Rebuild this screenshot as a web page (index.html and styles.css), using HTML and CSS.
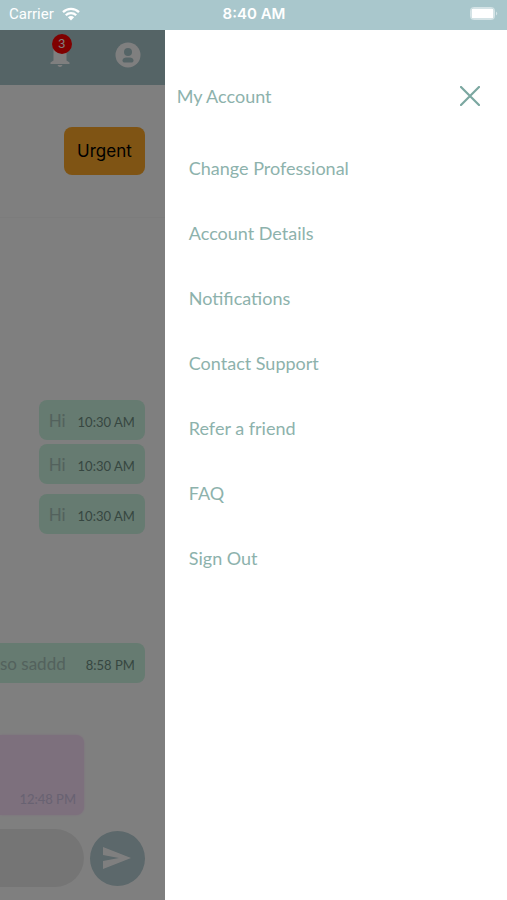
FILE: index.html
```html
<!DOCTYPE html>
<html lang="en">
<head>
    <meta charset="UTF-8">
    <meta name="viewport" content="width=device-width, initial-scale=1.0">
    <title>My Account</title>
    <link rel="stylesheet" href="styles.css">
</head>

<body>
    <div class="status-bar">
        <div class="carrier">
            <span>Carrier</span>
            <svg class="wifi" viewBox="0 0 18 14" width="18" height="14">
                <path d="M1 5.2a11.5 11.5 0 0 1 16 0M3.8 8.2a7.4 7.4 0 0 1 10.4 0" fill="none" stroke="currentColor" stroke-width="2.3"/>
                <path d="M5.9 10.3a4.4 4.4 0 0 1 6.2 0L9 13.6z" fill="currentColor"/>
            </svg>
        </div>
        <span class="clock">8:40 AM</span>
        <svg class="battery" viewBox="0 0 29 13" width="29" height="13">
            <rect x="0.5" y="0.5" width="24" height="12" rx="3" fill="none" stroke="#fff" stroke-opacity="0.5"/>
            <rect x="1.5" y="1.5" width="22" height="10" rx="1.5" fill="#fff"/>
            <path d="M26 4.5q2.5 2 0 4z" fill="#fff" fill-opacity="0.5"/>
        </svg>
    </div>

    <div class="screen">
        <main class="chat">
            <header class="chat-header">
                <button class="icon-button" aria-label="Alerts">
                    <svg viewBox="0 0 26 26" width="26" height="26" fill="currentColor">
                        <path d="M13 2c-4 0-6.5 3-6.5 7v9.500L3.500 20.500v1.500h19v-1.500l-3-2V9c0-4-2.500-7-6.500-7zM10.500 23h5c-.5 1.300-1.400 2-2.500 2s-2-.7-2.500-2z"/>
                    </svg>
                    <span class="badge">3</span>
                </button>
                <button class="icon-button" aria-label="Profile">
                    <svg viewBox="0 0 26 26" width="26" height="26">
                        <circle cx="13" cy="13" r="12.5" fill="currentColor"/>
                        <circle cx="13" cy="10" r="4" fill="#abc8cd"/>
                        <path d="M7.500 18.500c0-2.500 2.500-3 5.500-3s5.500.5 5.500 3c0 1.500-1 2-2 2h-7c-1 0-2-.5-2-2z" fill="#abc8cd"/>
                    </svg>
                </button>
            </header>

            <div class="chat-actions">
                <button class="urgent">Urgent</button>
            </div>

            <div class="messages">
                <div class="message-group">
                    <div class="message sent"><span>Hi</span><time>10:30 AM</time></div>
                    <div class="message sent"><span>Hi</span><time>10:30 AM</time></div>
                    <div class="message sent spaced"><span>Hi</span><time>10:30 AM</time></div>
                </div>
                <div class="message sent late"><span>so saddd</span><time>8:58 PM</time></div>
                <div class="message received"><time>12:48 PM</time></div>
            </div>

            <form class="composer">
                <input type="text" class="composer-input" aria-label="Message">
                <button type="button" class="send" aria-label="Send">
                    <svg viewBox="0 0 28 24" width="28" height="24">
                        <path d="M0 1l28 11L0 23v-8l16-3L0 9z" fill="currentColor"/>
                    </svg>
                </button>
            </form>
            <div class="overlay"></div>
        </main>

        <aside class="drawer">
            <div class="drawer-header">
                <h1>My Account</h1>
                <button class="close" aria-label="Close">
                    <svg viewBox="0 0 20 20" width="20" height="20">
                        <path d="M1 1l18 18M19 1L1 19" stroke="currentColor" stroke-width="2.2" stroke-linecap="round"/>
                    </svg>
                </button>
            </div>
            <nav class="menu">
                <a href="#professional">Change Professional</a>
                <a href="#details">Account Details</a>
                <a href="#notifications">Notifications</a>
                <a href="#support">Contact Support</a>
                <a href="#refer">Refer a friend</a>
                <a href="#faq">FAQ</a>
                <a href="#signout">Sign Out</a>
            </nav>
        </aside>
    </div>
</body>

</html>
```

FILE: styles.css
```css
* {
    box-sizing: border-box;
}

body {
    margin: 0;
    display: flex;
    flex-direction: column;
    height: 100vh;
    background-color: #fff;
    font-family: Lato, sans-serif;
}

button {
    padding: 0;
    border: none;
    background: none;
    cursor: pointer;
}

svg {
    display: block;
}

.status-bar {
    display: grid;
    grid-template-columns: 1fr auto 1fr;
    align-items: center;
    flex: 0 0 30px;
    padding: 0 8px 3px 9px;
    background-color: #a9c7cc;
    color: #fff;
    font-family: Roboto, sans-serif;
    font-size: 15px;
}

.carrier {
    display: flex;
    align-items: center;
    gap: 8px;
}

.clock {
    font-family: Inter, sans-serif;
    font-weight: 600;
}

.battery {
    justify-self: end;
}

.screen {
    flex: 1;
    min-height: 0;
    display: grid;
    grid-template-columns: 13fr 27fr;
}

/* Chat behind the drawer */
.chat {
    position: relative;
    display: flex;
    flex-direction: column;
    min-width: 0;
    min-height: 0;
    overflow: hidden;
}

.overlay {
    position: absolute;
    inset: 0;
    background-color: rgba(0, 0, 0, 0.5);
}

.chat-header {
    display: flex;
    justify-content: flex-end;
    align-items: center;
    gap: 42px;
    flex: 0 0 55px;
    padding: 0 24px 6px 0;
    background-color: #abc8cd;
}

.icon-button {
    position: relative;
    color: #fff;
}

.badge {
    position: absolute;
    top: -8px;
    left: 5px;
    width: 20px;
    height: 20px;
    border-radius: 50%;
    background-color: #f00;
    color: #fff;
    font-family: Inter, sans-serif;
    font-size: 12px;
    line-height: 20px;
}

.chat-actions {
    display: flex;
    justify-content: flex-end;
    padding: 42px 20px;
    border-bottom: 1px solid #f8f8f8;
}

.urgent {
    height: 48px;
    padding: 0 13px;
    border-radius: 8px;
    background-color: #ffa928;
    color: #000;
    font-family: Inter, sans-serif;
    font-size: 17px;
}

.messages {
    flex: 1;
    min-height: 0;
    display: flex;
    flex-direction: column;
    justify-content: flex-end;
    align-items: flex-end;
    padding: 0 20px 14px 0;
}

.message-group {
    display: flex;
    flex-direction: column;
    gap: 4px;
}

.message {
    display: flex;
    justify-content: space-between;
    align-items: center;
    gap: 12px;
    height: 40px;
    padding: 0 10px;
    border-radius: 8px;
    white-space: nowrap;
}

.message time {
    padding-top: 4px;
    font-size: 13px;
}

.sent {
    background-color: #cdf6e2;
    color: #a6c4ba;
    font-size: 17px;
}

.sent time {
    color: #6e8e82;
}

.spaced {
    margin-top: 6px;
}

.late {
    gap: 20px;
    margin: 109px 0 52px;
}

.received {
    align-self: flex-start;
    align-items: flex-end;
    justify-content: flex-end;
    width: 84px;
    height: 80px;
    padding: 0 8px 8px 0;
    border-radius: 0 8px 8px 0;
    background-color: #fae0fa;
    box-shadow: 0 0 3px #fae0fa;
    color: #d0c4e4;
}

.composer {
    display: flex;
    align-items: center;
    gap: 6px;
    padding: 0 20px 13px 0;
}

.composer-input {
    flex: 1;
    min-width: 0;
    height: 58px;
    border: none;
    border-radius: 0 29px 29px 0;
    background-color: #ebebeb;
}

.send {
    display: flex;
    justify-content: center;
    align-items: center;
    flex: 0 0 55px;
    height: 55px;
    border-radius: 50%;
    background-color: #b8d0d6;
    color: #fff;
}

/* Account drawer */
.drawer {
    background-color: #fff;
    color: #8db2ac;
}

.drawer-header {
    display: flex;
    justify-content: space-between;
    align-items: center;
    padding: 54px 27px 0 12px;
}

.drawer-header h1 {
    margin: 0;
    font-size: 18px;
    font-weight: 400;
    line-height: 24px;
}

.close {
    color: #7ba7a0;
}

.menu {
    display: flex;
    flex-direction: column;
    padding: 28px 24px;
}

.menu a {
    color: inherit;
    font-size: 18px;
    line-height: 65px;
    text-decoration: none;
}
```
